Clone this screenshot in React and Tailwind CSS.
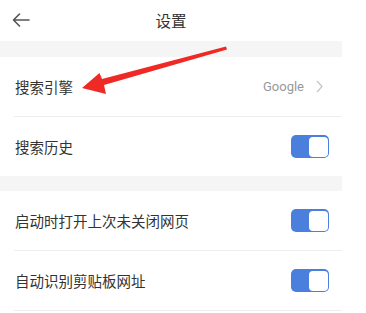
import React, { useState } from 'react';

const Toggle = ({ on, onChange }) => (
  <button
    onClick={onChange}
    className={`w-[38px] h-[23px] rounded-[5px] flex items-center p-[1.5px] ${
      on ? 'bg-[#4a7fdd] justify-end' : 'bg-[#d9d9d9] justify-start'
    }`}
  >
    <span className="block w-[19px] h-[20px] rounded-[4px] bg-white" />
  </button>
);

const Divider = () => <div className="ml-[14px] h-px bg-[#eeeeee]" />;

const Gap = ({ h }) => <div className={`bg-[#f5f5f5] ${h}`} />;

const Row = ({ label, children }) => (
  <div className="h-[59px] flex items-center justify-between pl-[15px] pr-[13px]">
    <span className="text-[14.5px] text-[#333333]">{label}</span>
    {children}
  </div>
);

const App = () => {
  const [history, setHistory] = useState(true);
  const [restore, setRestore] = useState(true);
  const [clipboard, setClipboard] = useState(true);

  return (
    <div
      className="relative w-[366px] h-[313px] bg-white overflow-hidden"
      style={{ fontFamily: '"Noto Sans CJK SC", "Noto Sans", sans-serif' }}
    >
      <div className="w-[342px]">
        <div className="relative h-[41px] flex items-center justify-center">
          <svg
            className="absolute left-[11px] top-[12px]"
            width="20"
            height="16"
            viewBox="0 0 20 16"
            fill="none"
            stroke="#555555"
            strokeWidth="1.6"
            strokeLinecap="round"
            strokeLinejoin="round"
          >
            <path d="M18 8H2.5M8.5 2L2.5 8l6 6" />
          </svg>
          <span className="text-[15.5px] text-[#333333]">设置</span>
        </div>

        <Gap h="h-[16px]" />

        <Row label="搜索引擎">
          <div className="flex items-center">
            <span className="text-[13px] text-[#999999] font-['Roboto',sans-serif]">Google</span>
            <svg className="ml-[12px] mr-[6px]" width="7" height="13" viewBox="0 0 7 13" fill="none" stroke="#c4c4c4" strokeWidth="1.2">
              <path d="M1 1l5 5.5L1 12" />
            </svg>
          </div>
        </Row>
        <Divider />
        <Row label="搜索历史">
          <Toggle on={history} onChange={() => setHistory(!history)} />
        </Row>

        <Gap h="h-[15px]" />

        <Row label="启动时打开上次未关闭网页">
          <Toggle on={restore} onChange={() => setRestore(!restore)} />
        </Row>
        <Divider />
        <Row label="自动识别剪贴板网址">
          <Toggle on={clipboard} onChange={() => setClipboard(!clipboard)} />
        </Row>
        <Divider />
      </div>

      {/* red annotation arrow */}
      <svg className="absolute left-0 top-0 pointer-events-none" width="366" height="313">
        <polygon
          points="226,46.5 227,49.5 104,85 106,94 82,88 99.5,73 102,79"
          fill="#ef2a26"
        />
      </svg>
    </div>
  );
};

export default App;
